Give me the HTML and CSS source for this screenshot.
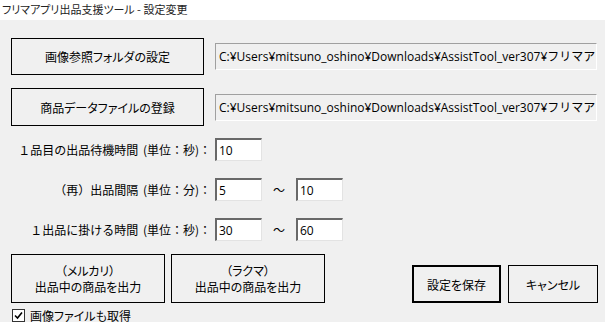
FILE: index.html
```html
<!DOCTYPE html>
<html lang="ja">
<head>
    <meta charset="UTF-8">
    <title>フリマアプリ出品支援ツール - 設定変更</title>
    <link rel="stylesheet" href="styles.css">
</head>
<body>
    <div class="titlebar">フリマアプリ出品支援ツール - 設定変更</div>

    <div class="main">
        <div class="path-row">
            <button class="btn path-btn">画像参照フォルダの設定</button>
            <div class="path-box">C:¥Users¥mitsuno_oshino¥Downloads¥AssistTool_ver307¥フリマア</div>
        </div>
        <div class="path-row second">
            <button class="btn path-btn">商品データファイルの登録</button>
            <div class="path-box">C:¥Users¥mitsuno_oshino¥Downloads¥AssistTool_ver307¥フリマア</div>
        </div>

        <div class="time-row first">
            <label class="time-label">１品目の出品待機時間 (単位：秒)：</label>
            <input class="num" type="text" value="10">
        </div>
        <div class="time-row">
            <label class="time-label">（再）出品間隔 (単位：分)：</label>
            <input class="num" type="text" value="5">
            <span class="tilde">～</span>
            <input class="num" type="text" value="10">
        </div>
        <div class="time-row">
            <label class="time-label">１出品に掛ける時間 (単位：秒)：</label>
            <input class="num" type="text" value="30">
            <span class="tilde">～</span>
            <input class="num" type="text" value="60">
        </div>

        <div class="bottom-row">
            <button class="btn out-btn">（メルカリ）<br>出品中の商品を出力</button>
            <button class="btn out-btn">（ラクマ）<br>出品中の商品を出力</button>
            <button class="btn save-btn">設定を保存</button>
            <button class="btn cancel-btn">キャンセル</button>
        </div>

        <div class="check-row">
            <span class="check">
                <svg width="9" height="9" viewBox="0 0 9 9"><path d="M1 4.5 L3.5 7 L8 1.5" fill="none" stroke="#000" stroke-width="1.6"/></svg>
            </span>
            <span>画像ファイルも取得</span>
        </div>
    </div>
</body>
</html>
```

FILE: styles.css
```css
body {
    margin: 0;
    width: 605px;
    height: 322px;
    background-color: #f0f0f0;
    font-family: "Noto Sans CJK JP", "Noto Sans", sans-serif;
    font-size: 12px;
    color: #000;
    overflow: hidden;
}
.titlebar {
    height: 20px;
    line-height: 18px;
    padding-left: 2px;
    background: #fff;
    color: #222;
    font-size: 11px;
    font-feature-settings: "palt";
}
.main {
    padding: 18px 0 0 11px;
}
.btn {
    box-sizing: border-box;
    background: #f0f0f0;
    border: 1px solid #000;
    font-family: "Noto Sans CJK JP", sans-serif;
    font-size: 12px;
    font-feature-settings: "palt";
    color: #000;
    padding: 0;
    margin: 0;
}
.path-row {
    display: flex;
    align-items: center;
}
.path-row.second {
    margin-top: 13px;
}
.path-btn {
    width: 193px;
    height: 37px;
}
.path-row.second .path-btn {
    height: 38px;
}
.path-box {
    box-sizing: border-box;
    margin-left: 11px;
    width: 382px;
    height: 27px;
    padding: 3px 0 0 3px;
    border-top: 1px solid #a0a0a0;
    border-left: 1px solid #a0a0a0;
    border-right: 1px solid #fff;
    border-bottom: 1px solid #fff;
    font-family: "Open Sans", "Noto Sans CJK JP", sans-serif;
    font-size: 12px;
    white-space: nowrap;
    overflow: hidden;
}
.time-row {
    display: flex;
    align-items: center;
    height: 23px;
    margin-top: 17px;
}
.time-row.first {
    margin-top: 12px;
}
.time-label {
    width: 200px;
    padding-right: 4px;
    text-align: right;
    font-size: 12px;
    word-spacing: 2px;
}
.num {
    box-sizing: border-box;
    width: 47px;
    height: 23px;
    margin: 0;
    padding: 1px 2px 0;
    background: #fff;
    border-top: 2px solid #696969;
    border-left: 2px solid #696969;
    border-right: 1px solid #e3e3e3;
    border-bottom: 1px solid #e3e3e3;
    outline: none;
    font-family: "Open Sans", sans-serif;
    font-size: 12px;
}
.tilde {
    width: 34px;
    text-align: center;
}
.bottom-row {
    display: flex;
    align-items: flex-end;
    margin-top: 13px;
}
.out-btn {
    width: 154px;
    height: 49px;
    line-height: 16px;
    margin-right: 6px;
}
.save-btn {
    width: 89px;
    height: 38px;
    margin-left: 81px;
    border: 2px solid #000;
}
.cancel-btn {
    width: 90px;
    height: 38px;
    margin-left: 7px;
}
.check-row {
    display: flex;
    align-items: center;
    height: 14px;
    margin-top: 5px;
    font-size: 12px;
    font-feature-settings: "palt";
    padding-left: 1px;
}
.check {
    box-sizing: border-box;
    width: 13px;
    height: 13px;
    border: 1px solid #333;
    background: #fff;
    display: flex;
    align-items: center;
    justify-content: center;
    margin-right: 5px;
}
```
